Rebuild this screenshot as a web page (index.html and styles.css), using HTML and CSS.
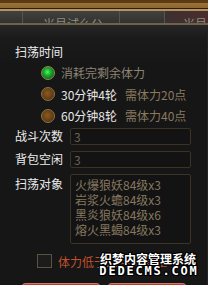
FILE: index.html
```html
<!DOCTYPE html>
<html>
<head>
<meta charset="utf-8">
<link rel="stylesheet" href="styles.css">
</head>
<body>
<div class="frame">
  <div class="topbar"></div>
  <div class="gap"></div>
  <div class="goldline"></div>
  <div class="tabs">
    <div class="tab t0"></div>
    <div class="tab t1"><span>米見试么公</span></div>
    <div class="tab t2"></div>
    <div class="tab t3"><span>米見</span></div>
  </div>
  <div class="tabline"></div>
  <div class="panel">
    <div class="title">扫荡时间</div>
    <div class="radios">
      <div class="radio-row"><span class="radio on"></span><span class="dim">消耗完剩余体力</span></div>
      <div class="radio-row"><span class="radio"></span><span class="bright">30分钟4轮</span><span class="cost">需体力20点</span></div>
      <div class="radio-row"><span class="radio"></span><span class="bright">60分钟8轮</span><span class="cost">需体力40点</span></div>
    </div>
    <div class="field"><span class="label">战斗次数</span><div class="input">3</div></div>
    <div class="field"><span class="label">背包空闲</span><div class="input">3</div></div>
    <div class="field top"><span class="label">扫荡对象</span>
      <div class="area">
        <div>火爆狼妖84级x3</div>
        <div>岩浆火蟾84级x3</div>
        <div>黑炎狼妖84级x6</div>
        <div>熔火黑蝎84级x3</div>
      </div>
    </div>
    <div class="check-row"><span class="check"></span><span class="warn">体力低于20点时停止</span></div>
    <div class="buttons"><div class="btn"></div><div class="btn"></div></div>
  </div>
  <div class="watermark">
    <div class="wm1">织梦内容管理系统</div>
    <div class="wm2">DEDECMS.COM</div>
  </div>
</div>
</body>
</html>
```
FILE: styles.css
```css
html, body {
  margin: 0;
  padding: 0;
  background: #151515;
}
.frame {
  position: relative;
  width: 208px;
  height: 285px;
  overflow: hidden;
  font-family: "Noto Sans CJK SC", "Liberation Sans", sans-serif;
  font-size: 12px;
}
.topbar {
  height: 8px;
  background: linear-gradient(#5a3812 0, #5e3c14 3px, #9a7238 3px, #8c6630 8px);
}
.gap { height: 1px; background: #2a2010; }
.goldline { height: 2px; background: #b8925a; }
.tabs {
  display: flex;
  height: 12px;
  background: linear-gradient(#414140, #323230);
}
.tab {
  height: 12px;
  overflow: hidden;
  border-right: 1px solid #555550;
  box-sizing: border-box;
  color: #8e8c80;
  font-size: 12px;
  line-height: 12px;
}
.tab span { display: block; padding-top: 7px; white-space: nowrap; }
.t0 { width: 23px; }
.t1 { width: 97px; padding-left: 20px; }
.t2 { width: 45px; }
.t3 { flex: 1; border-right: none; padding-left: 18px; background: linear-gradient(90deg, #3c3030, #4a2e2e); }
.tabline { height: 2px; background: #6e6248; }
.panel {
  height: 260px;
  background: linear-gradient(#262626 0, #1a1a1a 14px, #161616 40px);
  padding: 20px 0 0 15px;
  box-sizing: border-box;
  border-right: 1px solid #232323;
}
.title {
  color: #ececec;
  line-height: 14px;
  height: 14px;
}
.radios {
  padding: 3px 0 0 24px;
}
.radio-row {
  display: flex;
  align-items: center;
  height: 21.5px;
  gap: 6px;
}
.radio {
  width: 14px;
  height: 14px;
  border-radius: 50%;
  box-sizing: border-box;
  border: 1px solid #8a7448;
  background: radial-gradient(circle at 45% 45%, #8a5a22 0, #6a4216 50%, #3e2608 100%);
  flex: none;
  margin-left: 2px;
}
.radio.on {
  background: radial-gradient(circle at 45% 42%, #5cf06a 0, #18b030 35%, #0a6a1a 75%, #0a3a10 100%);
  border-color: #9a8450;
}
.dim { color: #8c8474; }
.bright { color: #e6e6e6; }
.cost { color: #8a7a5e; margin-left: 2px; }
.field {
  display: flex;
  align-items: center;
  margin-top: 6px;
}
.radios + .field { margin-top: 1px; }
.field.top { align-items: flex-start; }
.label {
  color: #ececec;
  width: 55px;
  flex: none;
  line-height: 16px;
}
.input {
  width: 121px;
  height: 17px;
  box-sizing: border-box;
  border: 1px solid #3a3326;
  border-radius: 2px;
  background: #131313;
  color: #6c6250;
  line-height: 15px;
  padding-left: 3px;
}
.area {
  width: 121px;
  height: 70px;
  box-sizing: border-box;
  border: 1px solid #3a3326;
  border-radius: 2px;
  background: #131313;
  color: #85775e;
  line-height: 15px;
  padding: 2px 0 0 4px;
}
.field.top .label { padding-top: 2px; }
.check-row {
  display: flex;
  align-items: center;
  margin: 9px 0 0 22px;
  gap: 6px;
}
.check {
  width: 15px;
  height: 14px;
  box-sizing: border-box;
  border: 1px solid #5a5244;
  background: #1c1c1a;
}
.warn { color: #c0502c; white-space: nowrap; }
.buttons {
  display: flex;
  gap: 8px;
  margin: 13px 0 0 7px;
}
.btn {
  width: 78px;
  height: 12px;
  box-sizing: border-box;
  border: 1px solid #d07868;
  border-radius: 3px 3px 0 0;
  background: linear-gradient(#b8402c, #8a2418);
}
.watermark {
  position: absolute;
  left: 98px;
  top: 251px;
  width: 100px;
  text-align: center;
  color: #ffffff;
  font-weight: bold;
  text-shadow: 1px 0 #000, -1px 0 #000, 0 1px #000, 0 -1px #000, 1px 1px #000, -1px -1px #000, 1px -1px #000, -1px 1px #000;
}
.wm1 { font-size: 12px; line-height: 15px; }
.wm2 { font-family: "DejaVu Sans Mono", monospace; font-size: 12px; line-height: 11px; letter-spacing: 1.8px; margin-right: -2px; }
```
